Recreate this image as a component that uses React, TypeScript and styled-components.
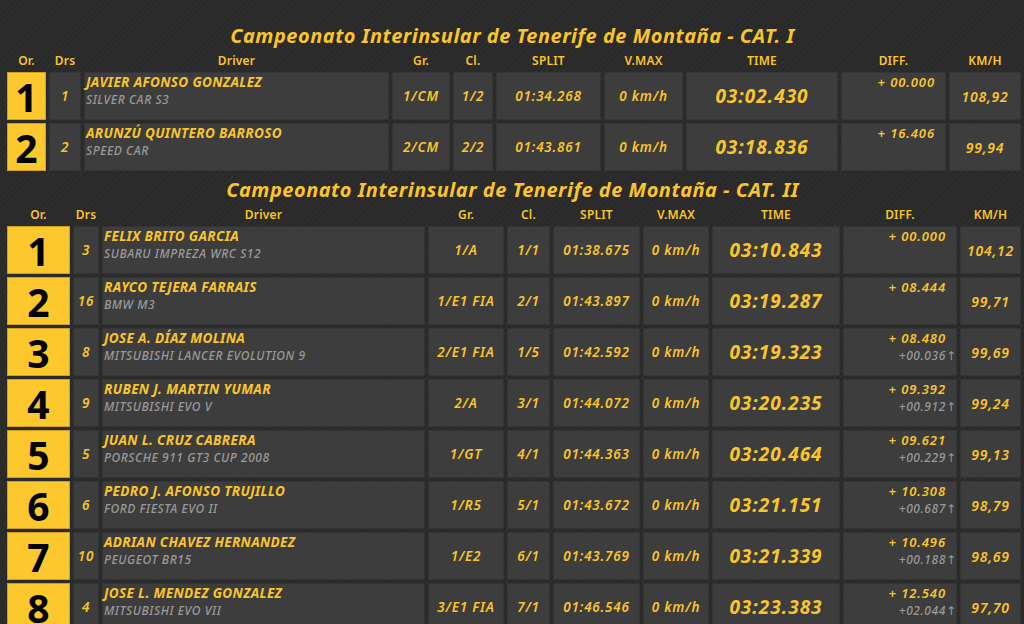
import React from 'react';
import styled, { createGlobalStyle } from 'styled-components';

const GlobalStyle = createGlobalStyle`
  html, body {
    margin: 0;
    padding: 0;
    background: #292929;
    overflow: hidden;
  }
  body {
    font-family: "Noto Sans", "DejaVu Sans", sans-serif;
  }
`;

type Result = {
  pos: number;
  drs: string;
  driver: string;
  car: string;
  gr: string;
  cl: string;
  split: string;
  vmax: string;
  time: string;
  diff: string;
  prev?: string;
  kmh: string;
};

const cat1: Result[] = [
  { pos: 1, drs: '1', driver: 'JAVIER AFONSO GONZALEZ', car: 'SILVER CAR S3', gr: '1/CM', cl: '1/2', split: '01:34.268', vmax: '0 km/h', time: '03:02.430', diff: '+ 00.000', kmh: '108,92' },
  { pos: 2, drs: '2', driver: 'ARUNZÚ QUINTERO BARROSO', car: 'SPEED CAR', gr: '2/CM', cl: '2/2', split: '01:43.861', vmax: '0 km/h', time: '03:18.836', diff: '+ 16.406', kmh: '99,94' },
];

const cat2: Result[] = [
  { pos: 1, drs: '3', driver: 'FELIX BRITO GARCIA', car: 'SUBARU IMPREZA WRC S12', gr: '1/A', cl: '1/1', split: '01:38.675', vmax: '0 km/h', time: '03:10.843', diff: '+ 00.000', kmh: '104,12' },
  { pos: 2, drs: '16', driver: 'RAYCO TEJERA FARRAIS', car: 'BMW M3', gr: '1/E1 FIA', cl: '2/1', split: '01:43.897', vmax: '0 km/h', time: '03:19.287', diff: '+ 08.444', kmh: '99,71' },
  { pos: 3, drs: '8', driver: 'JOSE A. DÍAZ MOLINA', car: 'MITSUBISHI LANCER EVOLUTION 9', gr: '2/E1 FIA', cl: '1/5', split: '01:42.592', vmax: '0 km/h', time: '03:19.323', diff: '+ 08.480', prev: '+00.036', kmh: '99,69' },
  { pos: 4, drs: '9', driver: 'RUBEN J. MARTIN YUMAR', car: 'MITSUBISHI EVO V', gr: '2/A', cl: '3/1', split: '01:44.072', vmax: '0 km/h', time: '03:20.235', diff: '+ 09.392', prev: '+00.912', kmh: '99,24' },
  { pos: 5, drs: '5', driver: 'JUAN L. CRUZ CABRERA', car: 'PORSCHE 911 GT3 CUP 2008', gr: '1/GT', cl: '4/1', split: '01:44.363', vmax: '0 km/h', time: '03:20.464', diff: '+ 09.621', prev: '+00.229', kmh: '99,13' },
  { pos: 6, drs: '6', driver: 'PEDRO J. AFONSO TRUJILLO', car: 'FORD FIESTA EVO II', gr: '1/R5', cl: '5/1', split: '01:43.672', vmax: '0 km/h', time: '03:21.151', diff: '+ 10.308', prev: '+00.687', kmh: '98,79' },
  { pos: 7, drs: '10', driver: 'ADRIAN CHAVEZ HERNANDEZ', car: 'PEUGEOT BR15', gr: '1/E2', cl: '6/1', split: '01:43.769', vmax: '0 km/h', time: '03:21.339', diff: '+ 10.496', prev: '+00.188', kmh: '98,69' },
  { pos: 8, drs: '4', driver: 'JOSE L. MENDEZ GONZALEZ', car: 'MITSUBISHI EVO VII', gr: '3/E1 FIA', cl: '7/1', split: '01:46.546', vmax: '0 km/h', time: '03:23.383', diff: '+ 12.540', prev: '+02.044', kmh: '97,70' },
];

const headers = ['Or.', 'Drs', 'Driver', 'Gr.', 'Cl.', 'SPLIT', 'V.MAX', 'TIME', 'DIFF.', 'KM/H'];

const YELLOW = '#fac52b';

const Page = styled.div`
  display: flex;
  flex-direction: column;
  gap: 7px;
  padding: 24px 3px 0 4px;
  min-height: 624px;
  box-sizing: border-box;
  background-color: #292929;
  background-image: repeating-linear-gradient(
    -45deg,
    rgba(255, 255, 255, 0.018) 0px,
    rgba(255, 255, 255, 0.018) 2px,
    rgba(0, 0, 0, 0) 2px,
    rgba(0, 0, 0, 0) 4px
  );
`;

const Section = styled.section`
  display: flex;
  flex-direction: column;
`;

const Title = styled.h2`
  margin: 0;
  height: 24px;
  line-height: 24px;
  text-align: center;
  font-size: 20px;
  font-weight: 700;
  font-style: italic;
  letter-spacing: 0.5px;
  color: ${YELLOW};
`;

const Table = styled.div`
  display: flex;
  flex-direction: column;
  gap: 3px;
  padding: 4px 0 0 3px;
`;

const Row = styled.div<{ $cols: string }>`
  display: grid;
  grid-template-columns: ${p => p.$cols};
  gap: 3px;
`;

const HeadRow = styled(Row)`
  height: 17px;
  align-items: center;
`;

const HeadCell = styled.div`
  text-align: center;
  font-size: 12px;
  font-weight: 600;
  letter-spacing: 0.2px;
  color: ${YELLOW};
  line-height: 17px;
`;

const Cell = styled.div<{ $align?: string }>`
  height: 48px;
  box-sizing: border-box;
  background: #3d3d3d;
  border: 1px solid #343434;
  display: flex;
  align-items: center;
  justify-content: ${p => p.$align ?? 'center'};
  color: ${YELLOW};
  font-style: italic;
  font-weight: 600;
  font-size: 13.5px;
  letter-spacing: 0.8px;
`;

const PosBox = styled(Cell)`
  background: #fdc82e;
  border-color: #d19f1e;
  color: #000;
  font-style: normal;
  font-weight: 700;
  font-size: 39px;
  letter-spacing: 0;
`;

const Stack = styled(Cell)`
  flex-direction: column;
  align-items: flex-start;
  justify-content: flex-start;
  padding: 1px 0 0 1px;
  line-height: 17px;
`;

const Name = styled.div`
  font-size: 13.5px;
  font-weight: 700;
  letter-spacing: 0.35px;
  color: ${YELLOW};
`;

const Car = styled.div`
  font-size: 12px;
  font-weight: 500;
  letter-spacing: 0.55px;
  color: #9a9a9a;
`;

const Time = styled(Cell)`
  font-size: 19px;
  font-weight: 700;
  letter-spacing: 1px;
`;

const KmhCell = styled(Cell)`
  font-size: 14px;
`;

const DiffCell = styled(Stack)`
  align-items: flex-end;
  padding-right: 1px;
`;

const Diff = styled.div`
  font-size: 13px;
  font-weight: 600;
  letter-spacing: 0.9px;
  color: ${YELLOW};
  padding-right: 9px;
`;

const Prev = styled.div`
  font-size: 12px;
  font-weight: 500;
  letter-spacing: 0.6px;
  color: #9a9a9a;
`;

const Arrow = styled.span`
  display: inline-block;
  width: 9px;
  text-align: right;
  font-style: normal;
  letter-spacing: 0;
`;

const Results = ({ title, rows, cols }: { title: string; rows: Result[]; cols: string }) => (
  <Section>
    <Title>{title}</Title>
    <Table>
      <HeadRow $cols={cols}>
        {headers.map(h => (
          <HeadCell key={h}>{h}</HeadCell>
        ))}
      </HeadRow>
      {rows.map(r => (
        <Row $cols={cols} key={r.pos}>
          <PosBox>{r.pos}</PosBox>
          <Cell>{r.drs}</Cell>
          <Stack>
            <Name>{r.driver}</Name>
            <Car>{r.car}</Car>
          </Stack>
          <Cell>{r.gr}</Cell>
          <Cell>{r.cl}</Cell>
          <Cell>{r.split}</Cell>
          <Cell>{r.vmax}</Cell>
          <Time>{r.time}</Time>
          <DiffCell>
            <Diff>{r.diff}</Diff>
            {r.prev && (
              <Prev>
                {r.prev}
                <Arrow>↑</Arrow>
              </Prev>
            )}
          </DiffCell>
          <KmhCell>{r.kmh}</KmhCell>
        </Row>
      ))}
    </Table>
  </Section>
);

const App = () => (
  <>
    <GlobalStyle />
    <Page>
      <Results
        title="Campeonato Interinsular de Tenerife de Montaña - CAT. I"
        rows={cat1}
        cols="39px 32px 305px 58px 40px 105px 79px 152px 105px 72px"
      />
      <Results
        title="Campeonato Interinsular de Tenerife de Montaña - CAT. II"
        rows={cat2}
        cols="63px 26px 323px 76px 43px 87px 66px 128px 114px 61px"
      />
    </Page>
  </>
);

export default App;
